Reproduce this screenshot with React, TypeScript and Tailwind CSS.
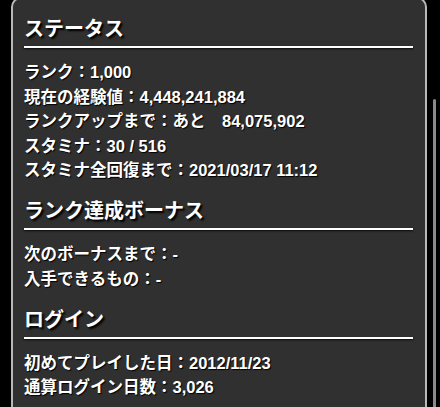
import React from "react";

const font = {
  fontFamily: '"Liberation Sans", "Noto Sans CJK JP", sans-serif',
};

function Section({
  title,
  rows,
  first,
}: {
  title: string;
  rows: string[];
  first?: boolean;
}) {
  return (
    <div className={first ? "" : "mt-[14.5px]"}>
      <div className="text-[20px] leading-[28px] font-bold text-white [text-shadow:2px_2px_2px_#000]">
        {title}
      </div>
      <div className="mt-[3px] h-[2px] bg-white shadow-[0_1px_2px_rgba(0,0,0,0.8)]" />
      <div className="pt-[12px]">
        {rows.map((r, i) => (
          <div
            key={i}
            className="text-[16.5px] leading-[24.5px] font-bold text-white whitespace-pre [text-shadow:1px_1px_1px_#000]"
          >
            {r}
          </div>
        ))}
      </div>
    </div>
  );
}

export default function App() {
  return (
    <div
      className="w-[440px] h-[407px] overflow-hidden bg-black flex flex-row"
      style={font}
    >
      <div className="ml-[11px] w-[416px] mt-[-3px] h-[430px] shrink-0 rounded-[10px] border-2 border-[#b8b8b8] bg-[#303030] pl-[11px] pr-[12px] pt-[16px]">
        <Section
          first
          title="ステータス"
          rows={[
            "ランク：1,000",
            "現在の経験値：4,448,241,884",
            "ランクアップまで：あと　84,075,902",
            "スタミナ：30 / 516",
            "スタミナ全回復まで：2021/03/17 11:12",
          ]}
        />
        <Section
          title="ランク達成ボーナス"
          rows={["次のボーナスまで：-", "入手できるもの：-"]}
        />
        <Section
          title="ログイン"
          rows={["初めてプレイした日：2012/11/23", "通算ログイン日数：3,026"]}
        />
      </div>
      <div className="ml-[6px] w-[3px] pt-[99px] h-full">
        <div className="w-[3px] h-full rounded-t-full bg-[#8a8a8a]" />
      </div>
    </div>
  );
}
